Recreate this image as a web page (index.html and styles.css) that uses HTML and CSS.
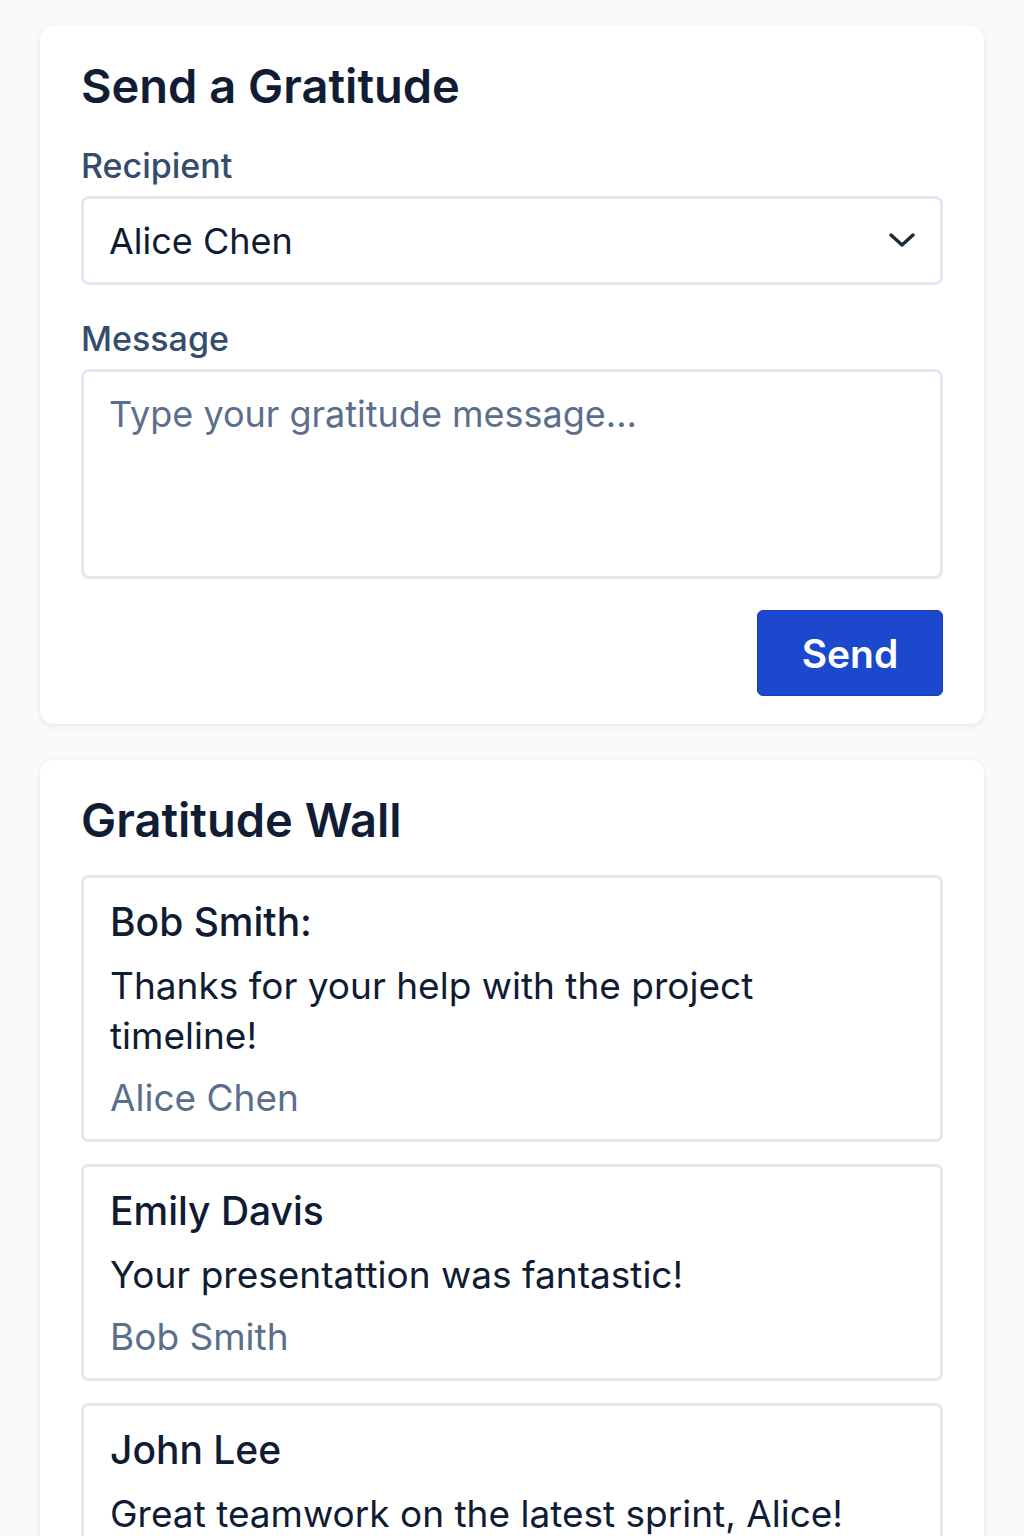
FILE: index.html
```html
<!DOCTYPE html>
<html lang="en">
<head>
  <meta charset="UTF-8" />
  <meta name="viewport" content="width=device-width, initial-scale=1.0" />
  <title>Gratitude</title>
  <link rel="stylesheet" href="styles.css">
</head>
<body>
  <div class="page">
    <div class="card">
      <h2>Send a Gratitude</h2>

      <label for="recipient">Recipient</label>
      <div class="select-wrap">
        <select id="recipient">
          <option>Alice Chen</option>
          <option>Bob Smith</option>
          <option>Emily Davis</option>
          <option>John Lee</option>
        </select>
        <svg class="chevron" width="26" height="14" viewBox="0 0 26 14" fill="none">
          <path d="M2 2 L13 12 L24 2" stroke="#1e293b" stroke-width="3.4" stroke-linecap="round" stroke-linejoin="round"/>
        </svg>
      </div>

      <label for="message">Message</label>
      <textarea id="message" placeholder="Type your gratitude message..."></textarea>

      <div class="actions">
        <button class="btn-send">Send</button>
      </div>
    </div>

    <div class="card">
      <h2>Gratitude Wall</h2>

      <div class="note">
        <div class="note-name">Bob Smith:</div>
        <div class="note-text">Thanks for your help with the project timeline!</div>
        <div class="note-from">Alice Chen</div>
      </div>

      <div class="note">
        <div class="note-name">Emily Davis</div>
        <div class="note-text">Your presentattion was fantastic!</div>
        <div class="note-from">Bob Smith</div>
      </div>

      <div class="note">
        <div class="note-name">John Lee</div>
        <div class="note-text">Great teamwork on the latest sprint, Alice!</div>
        <div class="note-from">Emily Davis</div>
      </div>
    </div>
  </div>
</body>
</html>
```

FILE: styles.css
```css
body {
  margin: 0;
  font-family: 'Inter', 'Noto Sans', sans-serif;
  background-color: #f8fafc;
  color: #0f1c33;
}
.page {
  padding: 26px 40px;
  display: flex;
  flex-direction: column;
  gap: 36px;
}
.card {
  background: white;
  border-radius: 14px;
  padding: 28px 41px 28px;
  box-shadow: 0 2px 6px rgba(15, 23, 42, 0.08);
}
h2 {
  margin: 0;
  font-size: 47px;
  line-height: 64px;
  font-weight: 600;
  color: #111d35;
}
label {
  display: block;
  font-size: 34px;
  font-weight: 500;
  color: #344d6c;
  margin-top: 28px;
  margin-bottom: 10px;
  line-height: 40px;
}
.select-wrap {
  position: relative;
}
.select-wrap + label {
  margin-top: 34px;
}
select, textarea {
  box-sizing: border-box;
  width: 100%;
  border: 3px solid #e2e8f0;
  border-radius: 8px;
  background: white;
  font-family: inherit;
  font-size: 36px;
  color: #0f1c33;
}
select {
  appearance: none;
  -webkit-appearance: none;
  height: 89px;
  padding: 0 60px 0 25px;
  display: block;
}
.chevron {
  position: absolute;
  right: 28px;
  top: 37px;
}
textarea {
  height: 210px;
  padding: 18px 25px;
  line-height: 48px;
  resize: none;
  display: block;
}
textarea::placeholder {
  color: #5b6f8c;
}
.actions {
  display: flex;
  justify-content: flex-end;
  margin-top: 31px;
}
.btn-send {
  width: 186px;
  height: 86px;
  background-color: #1b48cc;
  color: white;
  border: 1px solid #173fb5;
  border-radius: 6px;
  font-family: inherit;
  font-size: 39px;
  font-weight: 600;
  cursor: pointer;
}
.note {
  border: 3px solid #e2e8f0;
  border-radius: 7px;
  padding: 19px 40px 16px 26px;
  margin-top: 22px;
}
.card h2 + .note {
  margin-top: 23px;
}
.note-name {
  font-size: 39px;
  font-weight: 500;
  line-height: 50px;
}
.note-text {
  font-size: 37px;
  line-height: 50px;
  margin-top: 14px;
}
.note-from {
  font-size: 37px;
  line-height: 50px;
  margin-top: 12px;
  color: #5b6f8c;
}
```
